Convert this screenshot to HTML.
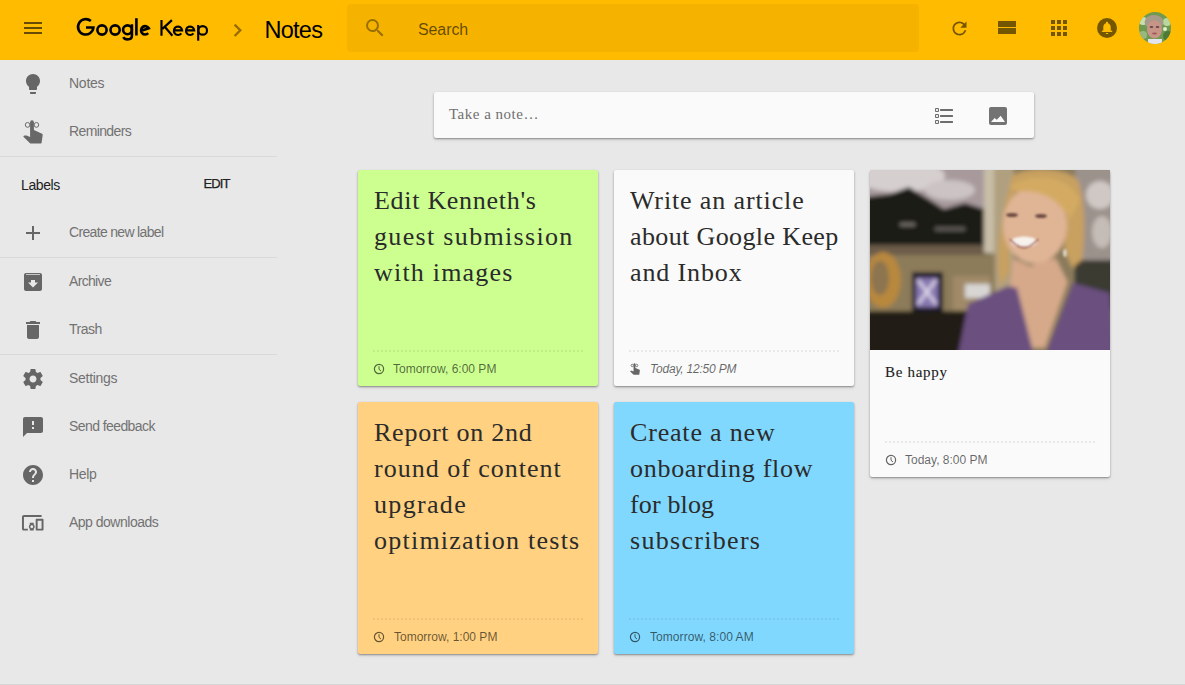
<!DOCTYPE html>
<html><head><meta charset="utf-8">
<style>
*{margin:0;padding:0;box-sizing:border-box}
html,body{width:1185px;height:685px;overflow:hidden;background:#e8e8e8;font-family:"Liberation Sans",sans-serif;position:relative}
.a{position:absolute}
.hdr{left:0;top:0;width:1185px;height:60px;background:#ffbb00}
.ico{fill:rgba(0,0,0,.54)}
.side{color:#727272;font-size:14px;letter-spacing:-0.3px;white-space:nowrap;line-height:1}
.div{height:1px;background:#d9d9d9;left:0;width:277px}
.card{border-radius:2px;box-shadow:0 1px 2px rgba(0,0,0,.38),0 2px 4px rgba(0,0,0,.07)}
.ttl{font-family:"Liberation Serif",serif;font-size:26px;line-height:36px;color:#2b2b2b;white-space:nowrap}
.dots{height:2px;background-image:linear-gradient(to right,rgba(0,0,0,.065) 50%,transparent 50%);background-size:4px 2px}
.rem{font-size:12px;color:rgba(0,0,0,.6);white-space:nowrap;line-height:1}
</style></head><body>
<!-- header -->
<div class="a hdr"></div>
<div class="a" style="left:24px;top:22px;width:18px;height:2px;background:rgba(0,0,0,.6)"></div>
<div class="a" style="left:24px;top:27px;width:18px;height:2px;background:rgba(0,0,0,.6)"></div>
<div class="a" style="left:24px;top:32px;width:18px;height:2px;background:rgba(0,0,0,.6)"></div>
<svg class="a" style="left:0;top:0" width="215" height="45" viewBox="0 0 215 45"><g fill="none" stroke="#000" stroke-width="2.6">
<path d="M90.85 21.08A7.7 7.7 0 1 0 93.4 27.5H86"/>
<circle cx="102" cy="30" r="4.6"/>
<circle cx="115.1" cy="30" r="4.6"/>
<circle cx="127.5" cy="29.8" r="4.4"/>
<path d="M131.9 24.3V35.5C131.9 38 130 39.4 127.6 39.4C125.6 39.4 124 38.5 123.3 37.2"/>
<path d="M136.4 18.2V35.5"/>
<path d="M140.6 31L148.8 28.2A4.15 4.2 0 1 0 148.2 33.2"/>
</g><g fill="none" stroke="#000" stroke-width="2.15">
<path d="M161.5 19.9V35.8M171.9 20.1L162.4 28.9M165.2 27.3L172.4 35.8"/>
<path d="M174 30.4H182.1A4.1 4.2 0 1 0 181.3 33.3"/>
<path d="M186.1 30.4H194.2A4.1 4.2 0 1 0 193.4 33.3"/>
<path d="M198.2 25V40.7"/><circle cx="202.7" cy="30.4" r="4.3"/>
</g></svg>
<svg class="a" style="left:232px;top:22px" width="12" height="16" viewBox="0 0 12 16"><path d="M2.6 2.6 L8.3 8.3 L2.6 14" fill="none" stroke="rgba(0,0,0,.42)" stroke-width="2.3"/></svg>
<div class="a" id="crumb" style="left:264.5px;top:15px;font-size:23.5px;line-height:30px;letter-spacing:-0.75px;color:#000;white-space:nowrap">Notes</div>
<div class="a" style="left:347px;top:4px;width:572px;height:48px;border-radius:4px;background:rgba(0,0,0,.04)"></div>
<svg class="a" style="left:363px;top:16px" width="24" height="24" viewBox="0 0 24 24"><path class="ico" d="M15.5 14h-.79l-.28-.27A6.47 6.47 0 0 0 16 9.5 6.5 6.5 0 1 0 9.5 16c1.61 0 3.09-.59 4.23-1.57l.27.28v.79l5 4.99L20.49 19l-4.99-5zm-6 0C7.01 14 5 11.99 5 9.5S7.01 5 9.5 5 14 7.01 14 9.5 11.99 14 9.5 14z" style="fill:rgba(0,0,0,.38)"/></svg>
<div class="a" id="search" style="left:418px;top:22px;letter-spacing:-0.1px;font-size:16px;line-height:16px;color:rgba(0,0,0,.6);white-space:nowrap">Search</div>
<svg class="a" style="left:949px;top:17.5px" width="21" height="21" viewBox="0 0 24 24"><path class="ico" d="M17.65 6.35A7.958 7.958 0 0 0 12 4c-4.42 0-7.99 3.58-7.99 8s3.57 8 7.99 8c3.73 0 6.84-2.55 7.73-6h-2.08A5.99 5.99 0 0 1 12 18c-3.31 0-6-2.69-6-6s2.69-6 6-6c1.66 0 3.14.69 4.22 1.78L13 11h7V4l-2.35 2.35z"/></svg>
<div class="a" style="left:998px;top:21px;width:18px;height:6px;background:rgba(0,0,0,.54)"></div>
<div class="a" style="left:998px;top:28px;width:18px;height:6px;background:rgba(0,0,0,.54)"></div>
<svg class="a" style="left:1051px;top:20px" width="16" height="16" viewBox="0 0 16 16"><g class="ico"><rect x="0" y="0" width="4" height="4"/><rect x="6" y="0" width="4" height="4"/><rect x="12" y="0" width="4" height="4"/><rect x="0" y="6" width="4" height="4"/><rect x="6" y="6" width="4" height="4"/><rect x="12" y="6" width="4" height="4"/><rect x="0" y="12" width="4" height="4"/><rect x="6" y="12" width="4" height="4"/><rect x="12" y="12" width="4" height="4"/></g></svg>
<svg class="a" style="left:1097px;top:18px" width="20" height="20" viewBox="0 0 20 20"><circle cx="10" cy="10" r="10" class="ico"/><path d="M10 3.8c-.6 0-1 .4-1 1v.5C7.3 5.8 6.3 7.3 6.3 9v3.6L4.9 12.8v1.2h10.3v-1.2L13.7 12.6V9c0-1.7-1-3.2-2.7-3.7v-.5c0-.6-.4-1-1-1zM8.9 15h2.2v1H8.9z" fill="#ffbb00"/></svg>
<svg class="a" style="left:1139px;top:12px" width="32" height="32" viewBox="0 0 32 32"><defs><clipPath id="cc"><circle cx="16" cy="16" r="16"/></clipPath><filter id="ab"><feGaussianBlur stdDeviation="0.6"/></filter></defs><g clip-path="url(#cc)"><rect width="32" height="32" fill="#6f9a50"/><g filter="url(#ab)"><circle cx="4" cy="9" r="4" fill="#c8e0b0"/><circle cx="29" cy="24" r="5" fill="#4e7a38"/><circle cx="28" cy="10" r="4" fill="#b8d8a0"/><circle cx="4" cy="23" r="4" fill="#98b880"/><circle cx="26" cy="17" r="2" fill="#e0f0d0"/><ellipse cx="15" cy="10" rx="9.5" ry="7" fill="#a89a88"/><ellipse cx="15.5" cy="17.5" rx="7.5" ry="9" fill="#c99488"/><rect x="9" y="27" width="14" height="6" fill="#e4e4ec"/><ellipse cx="12.5" cy="15" rx="1.8" ry="0.9" fill="#604848"/><ellipse cx="18.5" cy="15" rx="1.8" ry="0.9" fill="#604848"/><ellipse cx="15.5" cy="21.5" rx="2.5" ry="0.9" fill="#a05858"/></g></g></svg>

<!-- sidebar -->
<svg class="a" style="left:21px;top:72px" width="24" height="24" viewBox="0 0 24 24"><path style="fill:#666" d="M9 21c0 .55.45 1 1 1h4c.55 0 1-.45 1-1v-1H9v1zm3-19C8.14 2 5 5.14 5 9c0 2.38 1.19 4.47 3 5.74V17c0 .55.45 1 1 1h6c.55 0 1-.45 1-1v-2.26c1.81-1.27 3-3.36 3-5.74 0-3.86-3.14-7-7-7z"/></svg>
<div class="a side" style="left:69px;top:76px;letter-spacing:-0.25px">Notes</div>
<svg class="a" style="left:18px;top:115px" width="30" height="32" viewBox="0 0 30 32"><path fill="#686868" d="M12.1 7.2A1.9 1.9 0 0 1 15.9 7.2V15L24.1 18.7Q24.8 19.1 24.7 19.9L23.6 27.8Q23.5 28.5 22.7 28.5H12.3L5.4 21.8Q5.2 21 6.4 20.6Q7.6 20.2 8.6 20.6L12.1 22Z"/><g fill="none" stroke="#686868" stroke-width="1"><ellipse cx="9.6" cy="9.9" rx="2.3" ry="2.4"/><ellipse cx="18.4" cy="9.9" rx="2.3" ry="2.4"/></g></svg>
<div class="a side" style="left:69px;top:124px;letter-spacing:-0.62px">Reminders</div>
<div class="a div" style="top:156px"></div>
<div class="a side" style="left:21px;top:178px;color:#212121;letter-spacing:-0.4px">Labels</div>
<div class="a side" style="left:203.5px;top:177px;color:#212121;font-size:13px;letter-spacing:-0.85px;-webkit-text-stroke:0.25px #212121">EDIT</div>
<svg class="a" style="left:21px;top:221px" width="24" height="24" viewBox="0 0 24 24"><path style="fill:#666" d="M19 13h-6v6h-2v-6H5v-2h6V5h2v6h6v2z"/></svg>
<div class="a side" style="left:69px;top:225px;letter-spacing:-0.67px">Create new label</div>
<div class="a div" style="top:257px"></div>
<svg class="a" style="left:21px;top:270px" width="24" height="24" viewBox="0 0 24 24"><path style="fill:#666" d="M5 3h14c1.1 0 2 .9 2 2v14c0 1.1-.9 2-2 2H5c-1.1 0-2-.9-2-2V5c0-1.1.9-2 2-2zm0 1.2v.8h14v-.8H5zM12 17.5l5-5h-3V10h-4v2.5H7l5 5z"/></svg>
<div class="a side" style="left:69px;top:274px;letter-spacing:-0.67px">Archive</div>
<svg class="a" style="left:21px;top:318px" width="24" height="24" viewBox="0 0 24 24"><path style="fill:#666" d="M6 19c0 1.1.9 2 2 2h8c1.1 0 2-.9 2-2V7H6v12zM19 4h-3.5l-1-1h-5l-1 1H5v2h14V4z"/></svg>
<div class="a side" style="left:69px;top:322px;letter-spacing:-0.5px">Trash</div>
<div class="a div" style="top:354px"></div>
<svg class="a" style="left:21px;top:367px" width="24" height="24" viewBox="0 0 24 24"><path style="fill:#666" d="M19.43 12.98c.04-.32.07-.64.07-.98s-.03-.66-.07-.98l2.11-1.65c.19-.15.24-.42.12-.64l-2-3.46c-.12-.22-.39-.3-.61-.22l-2.49 1c-.52-.4-1.08-.73-1.69-.98l-.38-2.65A.488.488 0 0 0 14 2h-4c-.25 0-.46.18-.49.42l-.38 2.65c-.61.25-1.17.59-1.69.98l-2.49-1c-.23-.09-.49 0-.61.22l-2 3.46c-.13.22-.07.49.12.64l2.11 1.65c-.04.32-.07.65-.07.98s.03.66.07.98l-2.11 1.65c-.19.15-.24.42-.12.64l2 3.46c.12.22.39.3.61.22l2.49-1c.52.4 1.08.73 1.69.98l.38 2.65c.03.24.24.42.49.42h4c.25 0 .46-.18.49-.42l.38-2.65c.61-.25 1.17-.59 1.69-.98l2.49 1c.23.09.49 0 .61-.22l2-3.46c.12-.22.07-.49-.12-.64l-2.11-1.65zM12 15.5c-1.93 0-3.5-1.57-3.5-3.5s1.57-3.5 3.5-3.5 3.5 1.57 3.5 3.5-1.57 3.5-3.5 3.5z"/></svg>
<div class="a side" style="left:69px;top:371px;letter-spacing:-0.29px">Settings</div>
<svg class="a" style="left:21px;top:415px" width="24" height="24" viewBox="0 0 24 24"><path style="fill:#666" d="M20 2H4c-1.1 0-2 .9-2 2v18l4-4h14c1.1 0 2-.9 2-2V4c0-1.1-.9-2-2-2zm-7 12h-2v-2h2v2zm0-4h-2V6h2v4z"/></svg>
<div class="a side" style="left:69px;top:419px;letter-spacing:-0.58px">Send feedback</div>
<svg class="a" style="left:21px;top:463px" width="24" height="24" viewBox="0 0 24 24"><path style="fill:#666" d="M12 2C6.48 2 2 6.48 2 12s4.48 10 10 10 10-4.48 10-10S17.52 2 12 2zm1 17h-2v-2h2v2zm2.07-7.75l-.9.92C13.45 12.9 13 13.5 13 15h-2v-.5c0-1.1.45-2.1 1.17-2.83l1.24-1.26c.37-.36.59-.86.59-1.41 0-1.1-.9-2-2-2s-2 .9-2 2H8c0-2.21 1.79-4 4-4s4 1.79 4 4c0 .88-.36 1.68-.93 2.25z"/></svg>
<div class="a side" style="left:69px;top:467px;letter-spacing:-0.33px">Help</div>
<svg class="a" style="left:21px;top:511px" width="23.5" height="23.5" viewBox="0 0 24 24"><path style="fill:#666" d="M3 6h18V4H3c-1.1 0-2 .9-2 2v12c0 1.1.9 2 2 2h4v-2H3V6zm10 6H9v1.78c-.61.55-1 1.33-1 2.22s.39 1.67 1 2.22V20h4v-1.78c.61-.55 1-1.34 1-2.22s-.39-1.67-1-2.22V12zm-2 5.5c-.83 0-1.5-.67-1.5-1.5s.67-1.5 1.5-1.5 1.5.67 1.5 1.5-.67 1.5-1.5 1.5zM22 8h-6c-.5 0-1 .5-1 1v10c0 .5.5 1 1 1h6c.5 0 1-.5 1-1V9c0-.5-.5-1-1-1zm-1 10h-4v-8h4v8z"/></svg>
<div class="a side" style="left:69px;top:515px;letter-spacing:-0.5px">App downloads</div>

<!-- take a note -->
<div class="a card" style="left:434px;top:92px;width:600px;height:46px;background:#fafafa"></div>
<div class="a" style="left:449px;top:106px;font-family:'Liberation Serif',serif;font-size:15px;line-height:16px;color:#6f6f6f;white-space:nowrap;letter-spacing:0.5px">Take a note…</div>
<svg class="a" style="left:935px;top:108px" width="18" height="16" viewBox="0 0 18 16"><g style="fill:none;stroke:#6e6e6e;stroke-width:1.1"><rect x="0.55" y="0.55" width="2.9" height="2.9" rx="0.4"/><rect x="0.55" y="6.55" width="2.9" height="2.9" rx="0.4"/><rect x="0.55" y="12.55" width="2.9" height="2.9" rx="0.4"/></g><g style="fill:#6e6e6e"><rect x="5" y="1" width="13" height="2" rx="0.5"/><rect x="5" y="7" width="13" height="2" rx="0.5"/><rect x="5" y="13" width="13" height="2" rx="0.5"/></g></svg>
<svg class="a" style="left:989px;top:107px" width="18" height="18" viewBox="0 0 18 18"><rect x="0" y="0" width="18" height="18" rx="2" style="fill:#737373"/><path d="M2 15 L5.6 11 L7.8 12.8 L11.7 8.8 L16 15z" fill="#fafafa"/></svg>

<!-- cards -->
<div class="a card" style="left:358px;top:170px;width:240px;height:216px;background:#ccff90"></div>
<div class="a ttl" style="left:374px;top:183px"><div style="letter-spacing:0.71px">Edit Kenneth's</div><div style="letter-spacing:1.33px">guest submission</div><div style="letter-spacing:1.2px">with images</div></div>
<div class="a dots" style="left:373px;top:350px;width:210px"></div>
<svg class="a" style="left:373px;top:363px" width="12" height="12" viewBox="0 0 12 12"><circle cx="6" cy="6" r="4.6" fill="none" stroke="rgba(0,0,0,.6)" stroke-width="1.2"/><path d="M6 3.2V6.3L8 8" fill="none" stroke="rgba(0,0,0,.6)" stroke-width="1"/></svg>
<div class="a rem" style="left:393px;top:363px">Tomorrow, 6:00 PM</div>

<div class="a card" style="left:614px;top:170px;width:240px;height:216px;background:#fafafa"></div>
<div class="a ttl" style="left:630px;top:183px"><div style="letter-spacing:0.87px">Write an article</div><div style="letter-spacing:0.38px">about Google Keep</div><div style="letter-spacing:0.88px">and Inbox</div></div>
<div class="a dots" style="left:629px;top:350px;width:210px"></div>
<svg class="a" style="left:630px;top:363px" width="10" height="12" viewBox="5 5 20 24"><path fill="#666" d="M12.1 7.2A1.9 1.9 0 0 1 15.9 7.2V15L24.1 18.7Q24.8 19.1 24.7 19.9L23.6 27.8Q23.5 28.5 22.7 28.5H12.3L5.4 21.8Q5.2 21 6.4 20.6Q7.6 20.2 8.6 20.6L12.1 22Z"/><g fill="none" stroke="#666" stroke-width="1.6"><ellipse cx="9.6" cy="9.9" rx="2.3" ry="2.4"/><ellipse cx="18.4" cy="9.9" rx="2.3" ry="2.4"/></g></svg>
<div class="a rem" style="left:650px;top:363px;font-style:italic;letter-spacing:-0.21px">Today, 12:50 PM</div>

<div class="a card" style="left:870px;top:170px;width:240px;height:307px;background:#fafafa"></div>
<svg class="a" style="left:870px;top:170px" width="240" height="180" viewBox="0 0 240 180">
<defs><filter id="bl" x="-10%" y="-10%" width="120%" height="120%"><feGaussianBlur stdDeviation="2"/></filter><filter id="bl2" x="-30%" y="-30%" width="160%" height="160%"><feGaussianBlur stdDeviation="1"/></filter></defs>
<rect width="240" height="180" fill="#8a7a5c"/>
<g filter="url(#bl)">
<rect x="-5" y="-5" width="120" height="82" fill="#a89a9c"/>
<ellipse cx="30" cy="6" rx="45" ry="16" fill="#d6cfcf"/>
<ellipse cx="80" cy="20" rx="25" ry="10" fill="#cbc3c4"/>
<path d="M-5 27 L20 24 L39 17 L50 24 L60 30 L74 39 L95 33 L114 39 L115 76 L-5 76z" fill="#1c1a19"/>
<rect x="30" y="53" width="15" height="3" fill="#7a7570"/>
<rect x="65" y="57" width="30" height="4" fill="#5e5a56"/>
<rect x="-5" y="75" width="125" height="10" fill="#6c5c4a"/>
<rect x="114" y="-5" width="10" height="88" fill="#c8bea8"/>
<rect x="124" y="-5" width="20" height="145" fill="#b0a080"/>
<rect x="205" y="-5" width="40" height="95" fill="#9c928c"/>
<ellipse cx="230" cy="25" rx="14" ry="14" fill="#cfc8c4"/>
<ellipse cx="232" cy="62" rx="10" ry="16" fill="#c4bcb6"/>
<rect x="205" y="90" width="40" height="50" fill="#3a3a30"/>
<rect x="-5" y="85" width="130" height="57" fill="#8c7b5a"/>
<ellipse cx="13" cy="110" rx="18" ry="28" fill="#b8883e"/>
<ellipse cx="10" cy="108" rx="9" ry="17" fill="#8c7450"/>
<rect x="42" y="102" width="31" height="40" fill="#181628"/>
<rect x="46" y="108" width="22" height="29" fill="#8878b0"/>
<path d="M48 110 L66 134 M66 110 L48 134" stroke="#e8e0f0" stroke-width="2.5"/>
<rect x="83" y="106" width="37" height="34" fill="#a08a68"/>
<rect x="95" y="114" width="25" height="14" fill="#d8d6d4"/>
<rect x="-5" y="141" width="105" height="45" fill="#221a17"/>
<path d="M142 6 C155 -4 196 -4 208 10 C216 30 215 70 212 90 L202 98 L194 80 L197 40 L175 20 L146 20 L138 45 L140 100 L131 116 C126 100 128 70 134 40z" fill="#c8a060"/>
<ellipse cx="165" cy="55" rx="32" ry="39" fill="#e0b596"/>
<path d="M140 16 C160 2 200 4 210 30 L200 50 C190 30 170 18 146 22z" fill="#d4aa62"/>
<path d="M143 88 L160 96 L186 88 L198 112 L175 178 L158 178 L140 118z" fill="#d6a98a"/>
<path d="M88 185 L98 134 L138 116 L147 118 L164 185 L175 185 L203 113 L240 123 L245 185z" fill="#6a4f7f"/>
</g>
<g filter="url(#bl2)">
<ellipse cx="154" cy="72" rx="13" ry="5.5" fill="#f8f2ec"/>
<path d="M140 69 Q154 86 168 69" stroke="#a05a50" stroke-width="1.8" fill="none"/>
<ellipse cx="142" cy="45" rx="6" ry="2" fill="#6a4a40"/>
<ellipse cx="171" cy="46" rx="6" ry="2" fill="#6a4a40"/>
<ellipse cx="195" cy="83" rx="2" ry="4" fill="#d8d0c0"/>
</g>
</svg>
<div class="a" style="left:885px;top:364px;font-family:'Liberation Serif',serif;font-size:15px;line-height:16px;color:#212121;white-space:nowrap;letter-spacing:0.7px;-webkit-text-stroke:0.1px #212121">Be happy</div>
<div class="a dots" style="left:885px;top:441px;width:210px"></div>
<svg class="a" style="left:885px;top:454px" width="12" height="12" viewBox="0 0 12 12"><circle cx="6" cy="6" r="4.6" fill="none" stroke="rgba(0,0,0,.6)" stroke-width="1.2"/><path d="M6 3.2V6.3L8 8" fill="none" stroke="rgba(0,0,0,.6)" stroke-width="1"/></svg>
<div class="a rem" style="left:905px;top:454px">Today, 8:00 PM</div>

<div class="a card" style="left:358px;top:402px;width:240px;height:252px;background:#ffd180"></div>
<div class="a ttl" style="left:374px;top:415px"><div style="letter-spacing:0.75px">Report on 2nd</div><div style="letter-spacing:1.0px">round of content</div><div style="letter-spacing:1.33px">upgrade</div><div style="letter-spacing:1.24px">optimization tests</div></div>
<div class="a dots" style="left:373px;top:618px;width:210px"></div>
<svg class="a" style="left:373px;top:631px" width="12" height="12" viewBox="0 0 12 12"><circle cx="6" cy="6" r="4.6" fill="none" stroke="rgba(0,0,0,.6)" stroke-width="1.2"/><path d="M6 3.2V6.3L8 8" fill="none" stroke="rgba(0,0,0,.6)" stroke-width="1"/></svg>
<div class="a rem" style="left:394px;top:631px">Tomorrow, 1:00 PM</div>

<div class="a card" style="left:614px;top:402px;width:240px;height:252px;background:#80d8ff"></div>
<div class="a ttl" style="left:630px;top:415px"><div style="letter-spacing:0.82px">Create a new</div><div style="letter-spacing:0.71px">onboarding flow</div><div style="letter-spacing:0.14px">for blog</div><div style="letter-spacing:1.3px">subscribers</div></div>
<div class="a dots" style="left:629px;top:618px;width:210px"></div>
<svg class="a" style="left:629px;top:631px" width="12" height="12" viewBox="0 0 12 12"><circle cx="6" cy="6" r="4.6" fill="none" stroke="rgba(0,0,0,.6)" stroke-width="1.2"/><path d="M6 3.2V6.3L8 8" fill="none" stroke="rgba(0,0,0,.6)" stroke-width="1"/></svg>
<div class="a rem" style="left:650px;top:631px;letter-spacing:0.06px">Tomorrow, 8:00 AM</div>

<div class="a" style="left:0;top:684px;width:1185px;height:1px;background:#d6d6d6"></div>
</body></html>
